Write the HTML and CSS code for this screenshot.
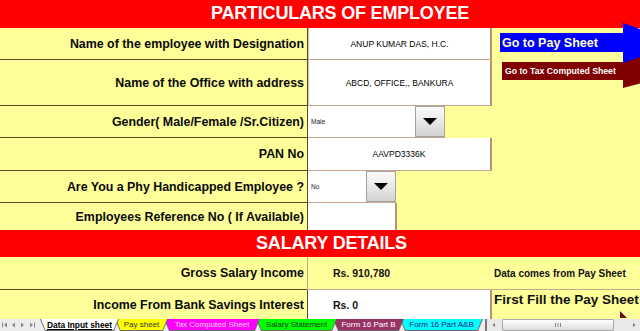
FILE: index.html
```html
<!DOCTYPE html>
<html>
<head>
<meta charset="utf-8">
<title>Data Input sheet</title>
<link rel="stylesheet" href="styles.css">
</head>
<body>
<div class="sheet">
  <div class="band band-top">PARTICULARS OF EMPLOYEE</div>

  <div class="lbl">Name of the employee with Designation</div>
  <div class="box box-top">ANUP KUMAR DAS, H.C.</div>
  <div class="nav-cell">
    <div class="arrow arrow-blue">Go to Pay Sheet</div>
    <div class="arrow arrow-red">Go to Tax Computed Sheet</div>
  </div>

  <div class="lbl">Name of the Office with address</div>
  <div class="box box-mid">ABCD, OFFICE,, BANKURA</div>

  <div class="lbl">Gender( Male/Female /Sr.Citizen)</div>
  <div class="field-cell">
    <div class="pick pick-gender"><span class="pick-val">Male</span><span class="pick-btn"></span></div>
  </div>

  <div class="lbl">PAN No</div>
  <div class="box box-pan">AAVPD3336K</div>

  <div class="lbl">Are You a Phy Handicapped Employee ?</div>
  <div class="field-cell">
    <div class="pick pick-ph"><span class="pick-val">No</span><span class="pick-btn"></span></div>
  </div>

  <div class="lbl lbl-last">Employees Reference No ( If Available)</div>
  <div class="field-cell">
    <div class="ref-box"></div>
  </div>

  <div class="band band-salary">SALARY DETAILS</div>

  <div class="lbl lbl-sal">Gross Salary Income</div>
  <div class="val val-gross">Rs. 910,780</div>
  <div class="note note-gross">Data comes from Pay Sheet</div>

  <div class="lbl lbl-sal lbl-last">Income From Bank Savings Interest</div>
  <div class="val val-income">Rs. 0</div>
  <div class="note note-fill">First Fill the Pay Sheet<span class="pointer"></span></div>
</div>

<div class="tabs">
  <div class="tab-nav">
    <svg width="40" height="12" viewBox="0 0 40 12">
      <rect x="2" y="3.5" width="1" height="5" fill="#8a8a8a"/>
      <polygon points="7,3.5 4,6 7,8.5" fill="#8a8a8a"/>
      <polygon points="15,3.5 12,6 15,8.5" fill="#8a8a8a"/>
      <polygon points="21,3.5 24,6 21,8.5" fill="#8a8a8a"/>
      <polygon points="30,3.5 33,6 30,8.5" fill="#8a8a8a"/>
      <rect x="34" y="3.5" width="1" height="5" fill="#8a8a8a"/>
    </svg>
  </div>
  <div class="tab tab-active"><span class="tab-face">Data Input sheet</span></div>
  <div class="tab tab-pay"><span class="tab-face">Pay sheet</span></div>
  <div class="tab tab-tax"><span class="tab-face">Tax Computed Sheet</span></div>
  <div class="tab tab-sal"><span class="tab-face">Salary Statement</span></div>
  <div class="tab tab-f16b"><span class="tab-face">Form 16 Part B</span></div>
  <div class="tab tab-f16ab"><span class="tab-face">Form 16 Part A&amp;B</span></div>
  <div class="split"></div>
  <div class="hscroll">
    <span class="sc-arrow">
      <svg width="8" height="8" viewBox="0 0 8 8"><polygon points="5,2 2.5,4 5,6" fill="#777"/></svg>
    </span>
    <span class="sc-thumb">
      <svg width="8" height="6" viewBox="0 0 8 6"><rect x="1" y="1" width="1" height="4" fill="#888"/><rect x="3.5" y="1" width="1" height="4" fill="#888"/><rect x="6" y="1" width="1" height="4" fill="#888"/></svg>
    </span>
    <span class="sc-track"></span>
    <span class="sc-arrow">
      <svg width="8" height="8" viewBox="0 0 8 8"><polygon points="3,2 5.5,4 3,6" fill="#777"/></svg>
    </span>
  </div>
</div>
</body>
</html>
```

FILE: styles.css
```css
html, body {
  margin: 0;
  padding: 0;
}

body {
  width: 640px;
  height: 331px;
  overflow: hidden;
  background: #ffff99;
  font-family: "Liberation Sans", Arial, sans-serif;
  color: #000;
}

.sheet {
  display: grid;
  grid-template-columns: 308px 184px 148px;
  grid-template-rows: 28px 32px 46px 32px 33px 32px 27px 27px 33px 29px;
  background: #ffff99;
  overflow: hidden;
}

/* red section headers */
.band {
  grid-column: 1 / -1;
  background: #ff0000;
  color: #ffffff;
  font-weight: bold;
  font-size: 18px;
  display: flex;
  align-items: center;
  justify-content: center;
  letter-spacing: -0.2px;
}

.band-top {
  padding-left: 40px;
  padding-bottom: 1px;
}

.band-salary {
  padding-left: 23px;
}

/* label column */
.lbl {
  display: flex;
  align-items: center;
  justify-content: flex-end;
  padding-right: 3px;
  font-weight: bold;
  font-size: 12.4px;
  color: #0a0a0a;
  border-right: 1px solid #5a4a22;
  border-bottom: 1px solid #5a4a22;
  white-space: nowrap;
}

.lbl-last {
  border-bottom: none;
}

/* white input boxes */
.box {
  background: #ffffff;
  display: flex;
  align-items: center;
  justify-content: center;
  font-size: 8.5px;
  color: #000;
  border-bottom: 1px solid #c9a78c;
  border-right: 2px solid #b98f78;
}

.box-top,
.box-mid {
  border-left: 1px solid #d8c0ac;
}

.field-cell {
  display: flex;
  align-items: stretch;
}

/* dropdown cells */
.pick {
  display: flex;
  background: #ffffff;
  border-bottom: 1px solid #c9a78c;
}

.pick-gender {
  width: 137px;
}

.pick-ph {
  width: 88px;
}

.pick-val {
  flex: 1;
  display: flex;
  align-items: center;
  padding-left: 3px;
  font-size: 6.5px;
  color: #222;
}

.pick-btn {
  width: 28px;
  display: flex;
  align-items: center;
  justify-content: center;
  background: linear-gradient(#fbfbfb, #e6e6e6 55%, #d2d2d2);
  border: 1px solid #a3a3a3;
}

.pick-btn::before {
  content: "";
  width: 0;
  height: 0;
  border-left: 7.5px solid transparent;
  border-right: 7.5px solid transparent;
  border-top: 7px solid #000;
}

.ref-box {
  width: 87px;
  background: #ffffff;
  border-right: 2px solid #b98f78;
}

/* navigation arrows (shapes over the sheet) */
.nav-cell {
  grid-column: 3;
  grid-row: 2 / 8;
  display: flex;
  flex-direction: column;
  align-items: flex-start;
  padding: 5px 0 0 8px;
  gap: 10px;
}

.arrow {
  position: relative;
  display: flex;
  align-items: center;
  font-weight: bold;
  white-space: nowrap;
}

.arrow::after {
  content: "";
  position: absolute;
  left: 100%;
  width: 0;
  height: 0;
  border-style: solid;
}

.arrow-blue {
  width: 121px;
  height: 19px;
  padding-left: 2px;
  background: #0000ff;
  color: #ffffc8;
  font-size: 12.5px;
  z-index: 2;
}

.arrow-blue::after {
  top: -10px;
  border-width: 20px 0 20px 56px;
  border-color: transparent transparent transparent #0000ff;
}

.arrow-red {
  width: 118px;
  height: 18px;
  margin-left: 2px;
  padding-left: 3px;
  background: #800000;
  color: #ffffff;
  font-size: 8.7px;
  z-index: 1;
}

.arrow-red::after {
  top: -10px;
  border-width: 18px 0 18px 68px;
  border-color: transparent transparent transparent #800000;
}

/* salary values */
.val {
  display: flex;
  align-items: center;
  padding-left: 25px;
  font-weight: bold;
  font-size: 10.5px;
  color: #111;
}

.val-gross {
  border-left: 1px solid #c9a78c;
  border-bottom: 1px solid #c9a78c;
  margin-left: -1px;
}

.val-income {
  background: #ffffff;
  border-right: 2px solid #b98f78;
}

.note {
  font-weight: bold;
  color: #111;
  white-space: nowrap;
}

.note-gross {
  display: flex;
  align-items: center;
  padding-left: 2px;
  font-size: 10px;
  border-bottom: 1px solid #c9a78c;
}

.note-fill {
  position: relative;
  padding-left: 2px;
  padding-top: 2px;
  font-size: 13.5px;
}

.pointer {
  position: absolute;
  left: 128px;
  top: 21px;
  width: 0;
  height: 0;
  border-top: 7px solid transparent;
  border-left: 7px solid #6e0e0e;
}

/* sheet tabs */
.tabs {
  display: flex;
  height: 12px;
  background: #ececec;
  font-size: 8px;
  align-items: stretch;
}

.tab-nav {
  width: 40px;
  display: flex;
  align-items: center;
}

.tab-nav svg {
  display: block;
}

.tab {
  display: flex;
  background: #6b6b6b;
  margin-right: -4px;
  clip-path: polygon(0 0, 100% 0, calc(100% - 5px) 100%, 5px 100%);
  padding: 0 1px 1px 1px;
}

.tab-face {
  flex: 1;
  display: flex;
  align-items: center;
  justify-content: center;
  white-space: nowrap;
  clip-path: polygon(0 0, 100% 0, calc(100% - 4.5px) 100%, 4.5px 100%);
}

.tab-active {
  width: 77px;
  z-index: 10;
}

.tab-active .tab-face {
  background: #ffffff;
  font-weight: bold;
  text-decoration: underline;
  color: #000;
  font-size: 8.4px;
}

.tab-pay {
  width: 51px;
  z-index: 6;
}

.tab-pay .tab-face {
  background: #ffff00;
  color: #333;
}

.tab-tax {
  width: 94px;
  z-index: 5;
}

.tab-tax .tab-face {
  background: #ff00ff;
  color: #ffd6ff;
}

.tab-sal {
  width: 79px;
  z-index: 4;
}

.tab-sal .tab-face {
  background: #00ff00;
  color: #1a3a1a;
}

.tab-f16b {
  width: 69px;
  z-index: 3;
}

.tab-f16b .tab-face {
  background: #993366;
  color: #ffffff;
}

.tab-f16ab {
  width: 81px;
  margin-right: 0;
  z-index: 2;
}

.tab-f16ab .tab-face {
  background: #00ffff;
  color: #1a1a80;
}

.split {
  width: 2px;
  margin-left: 2px;
  background: #7a7a7a;
}

.hscroll {
  flex: 1;
  display: flex;
  align-items: stretch;
  background: #e9e9e9;
  padding-left: 1px;
}

.sc-arrow {
  width: 12px;
  display: flex;
  align-items: center;
  justify-content: center;
}

.sc-thumb {
  width: 110px;
  margin-left: 2px;
  display: flex;
  align-items: center;
  justify-content: center;
  background: linear-gradient(#ffffff, #dcdcdc);
  border: 1px solid #a8a8a8;
  border-radius: 1px;
}

.sc-track {
  flex: 1;
}
```
